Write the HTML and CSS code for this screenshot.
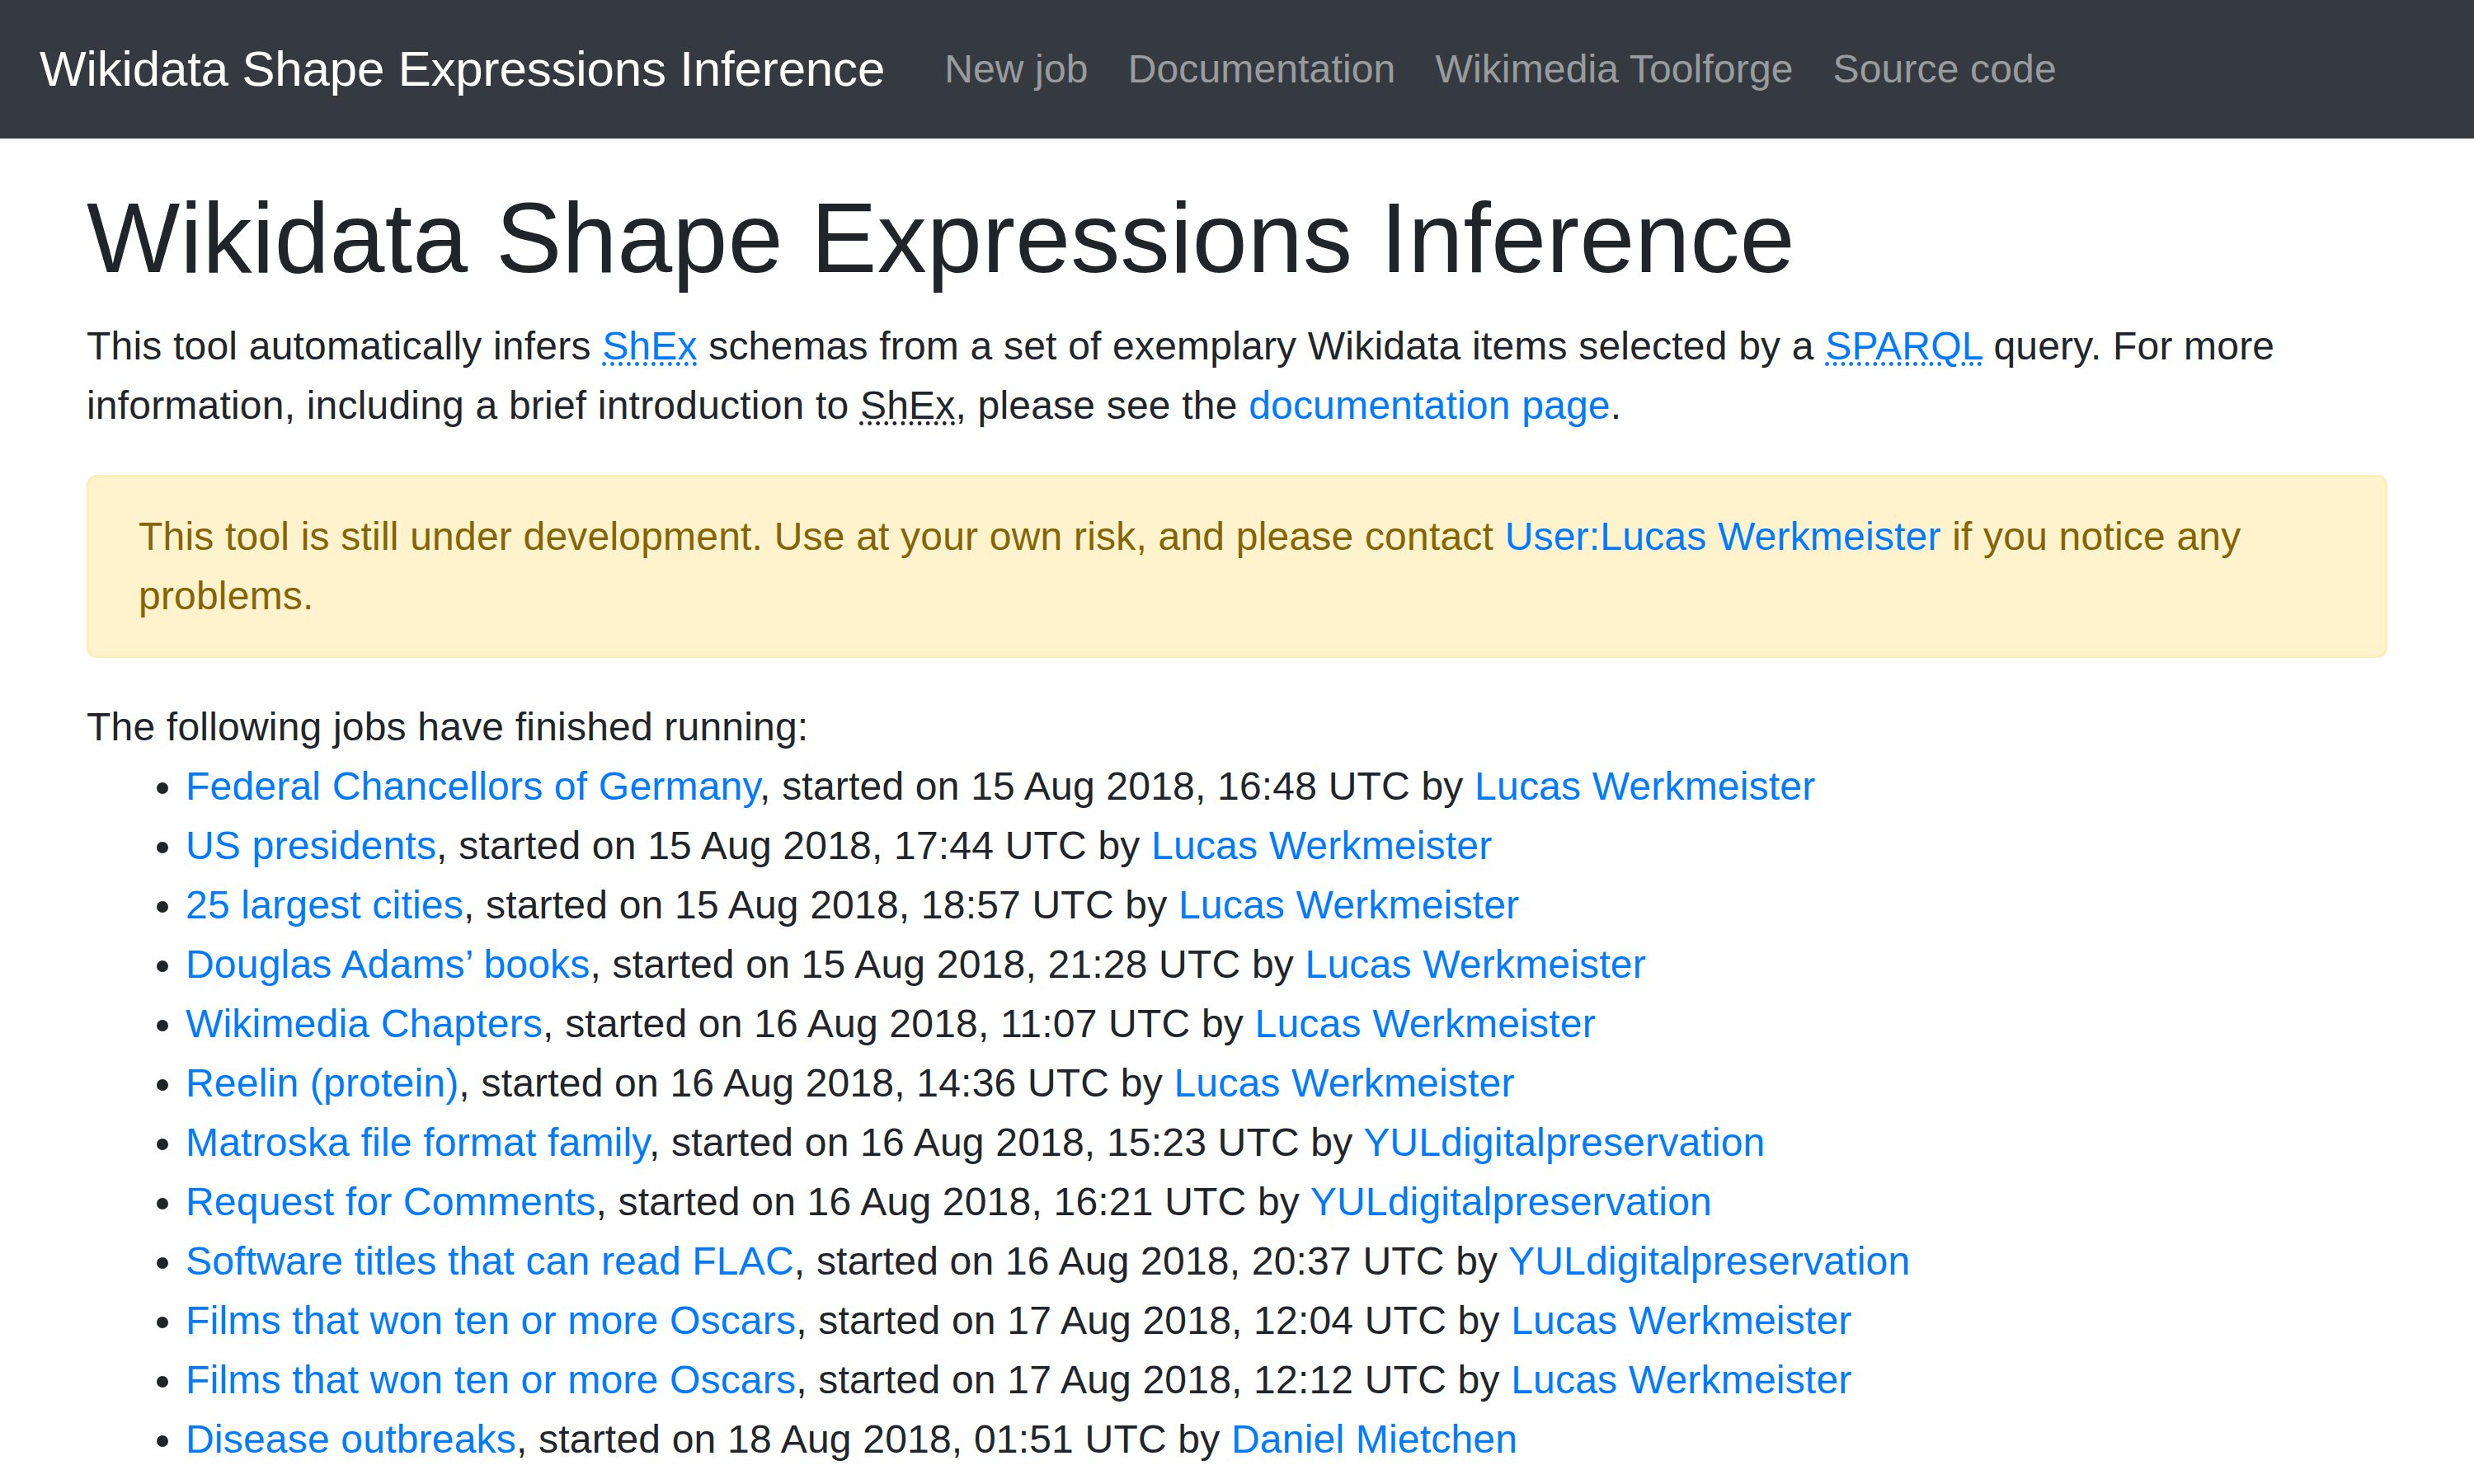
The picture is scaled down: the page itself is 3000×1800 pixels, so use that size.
FILE: index.html
```html
<!DOCTYPE html>
<html lang="en">
<head>
<meta charset="utf-8">
<title>Wikidata Shape Expressions Inference</title>
<link rel="stylesheet" href="styles.css">
</head>
<body>
<nav class="navbar">
  <a class="navbar-brand" href="#">Wikidata Shape Expressions Inference</a>
  <ul class="navbar-nav">
    <li><a class="nav-link" href="#">New job</a></li>
    <li><a class="nav-link" href="#">Documentation</a></li>
    <li><a class="nav-link" href="#">Wikimedia Toolforge</a></li>
    <li><a class="nav-link" href="#">Source code</a></li>
  </ul>
</nav>
<main class="container">
  <h1>Wikidata Shape Expressions Inference</h1>
  <p>This tool automatically infers <a href="#"><abbr title="Shape Expressions">ShEx</abbr></a> schemas from a set of exemplary Wikidata items selected by a <a href="#"><abbr title="SPARQL Protocol and RDF Query Language">SPARQL</abbr></a> query. For more information, including a brief introduction to <abbr title="Shape Expressions">ShEx</abbr>, please see the <a href="#">documentation page</a>.</p>
  <div class="alert">This tool is still under development. Use at your own risk, and please contact <a href="#">User:Lucas Werkmeister</a> if you notice any problems.</div>
  <p class="jobs-intro">The following jobs have finished running:</p>
  <ul class="jobs">
    <li><a href="#">Federal Chancellors of Germany</a>, started on 15 Aug 2018, 16:48 UTC by <a href="#">Lucas Werkmeister</a></li>
    <li><a href="#">US presidents</a>, started on 15 Aug 2018, 17:44 UTC by <a href="#">Lucas Werkmeister</a></li>
    <li><a href="#">25 largest cities</a>, started on 15 Aug 2018, 18:57 UTC by <a href="#">Lucas Werkmeister</a></li>
    <li><a href="#">Douglas Adams’ books</a>, started on 15 Aug 2018, 21:28 UTC by <a href="#">Lucas Werkmeister</a></li>
    <li><a href="#">Wikimedia Chapters</a>, started on 16 Aug 2018, 11:07 UTC by <a href="#">Lucas Werkmeister</a></li>
    <li><a href="#">Reelin (protein)</a>, started on 16 Aug 2018, 14:36 UTC by <a href="#">Lucas Werkmeister</a></li>
    <li><a href="#">Matroska file format family</a>, started on 16 Aug 2018, 15:23 UTC by <a href="#">YULdigitalpreservation</a></li>
    <li><a href="#">Request for Comments</a>, started on 16 Aug 2018, 16:21 UTC by <a href="#">YULdigitalpreservation</a></li>
    <li><a href="#">Software titles that can read FLAC</a>, started on 16 Aug 2018, 20:37 UTC by <a href="#">YULdigitalpreservation</a></li>
    <li><a href="#">Films that won ten or more Oscars</a>, started on 17 Aug 2018, 12:04 UTC by <a href="#">Lucas Werkmeister</a></li>
    <li><a href="#">Films that won ten or more Oscars</a>, started on 17 Aug 2018, 12:12 UTC by <a href="#">Lucas Werkmeister</a></li>
    <li><a href="#">Disease outbreaks</a>, started on 18 Aug 2018, 01:51 UTC by <a href="#">Daniel Mietchen</a></li>
  </ul>
</main>
</body>
</html>
```
FILE: styles.css
```css
*, *::before, *::after {
  box-sizing: border-box;
}
html {
  font-size: 48px;
  overflow: hidden;
}
body {
  margin: 0;
  font-family: "Liberation Sans", Arial, sans-serif;
  font-size: 1rem;
  line-height: 1.5;
  color: #212529;
  background: #fff;
}
a {
  color: #007bff;
  text-decoration: none;
}
abbr[title] {
  text-decoration: underline dotted;
  cursor: help;
}
.navbar {
  display: flex;
  align-items: center;
  background: #343a40;
  padding: 0.5rem 1rem;
}
.navbar-brand {
  color: #fff;
  font-size: 1.25rem;
  line-height: 1.5;
  padding: 0.3125rem 0;
  margin-right: 1rem;
  white-space: nowrap;
  letter-spacing: -0.15px;
}
.navbar-nav {
  display: flex;
  list-style: none;
  margin: 0;
  padding: 0;
}
.nav-link {
  display: block;
  padding: 0.5rem;
  color: rgba(255, 255, 255, 0.5);
  letter-spacing: 0.15px;
}
.container {
  width: 100%;
  max-width: 2880px;
  margin: 1rem auto 0;
  padding: 0 45px;
}
h1 {
  font-size: 2.5rem;
  font-weight: 500;
  line-height: 1.2;
  margin: 0 0 0.5rem;
  letter-spacing: 0.3px;
}
p {
  margin: 0 0 1rem;
}
p, .alert, .jobs {
  letter-spacing: 0.2px;
}
.alert {
  padding: 0.75rem 1.25rem;
  margin-bottom: 1rem;
  border: 3px solid #ffeeba;
  border-radius: 0.25rem;
  background: #fff3cd;
  color: #856404;
}
.jobs-intro {
  margin-bottom: 0;
}
.jobs {
  margin: 0 0 1rem;
  padding-left: 2.5rem;
}
```
